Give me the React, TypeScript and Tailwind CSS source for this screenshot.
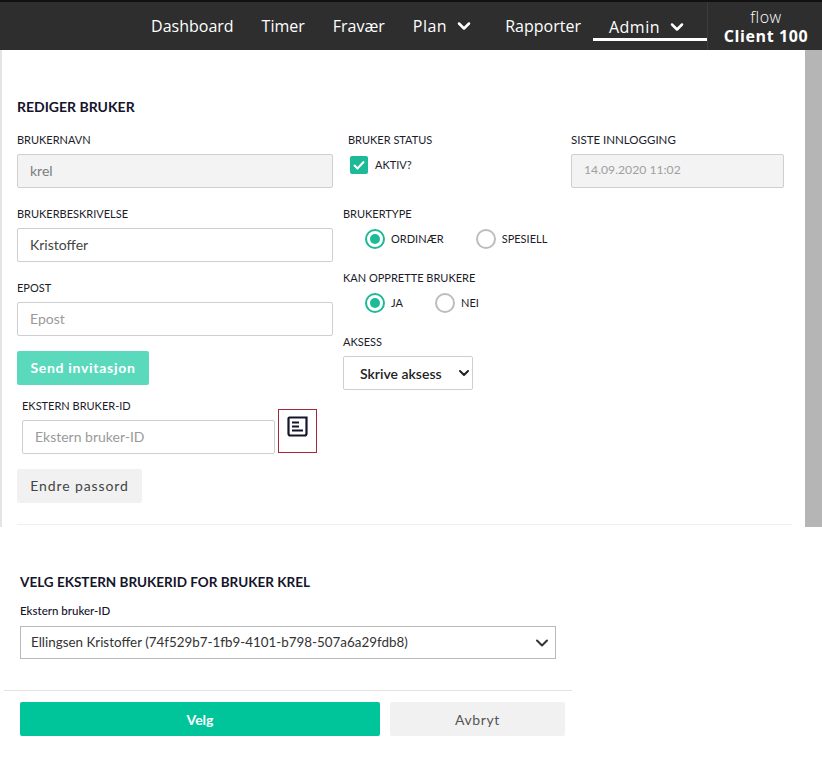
import { ChevronDown } from "lucide-react";

const formFont = "font-['Lato',sans-serif]";

const Label = ({
  children,
  className = "",
  size = "text-[11px]",
}: {
  children: string;
  className?: string;
  size?: string;
}) => <div className={`${size} leading-[14px] text-[#1c1c2b] ${className}`}>{children}</div>;

const Field = ({
  value,
  color = "text-[#444]",
  size = "text-[14px]",
  disabled,
  className = "",
}: {
  value: string;
  color?: string;
  size?: string;
  disabled?: boolean;
  className?: string;
}) => (
  <div
    className={`h-[34px] border border-[#cfcfcf] rounded-[2px] px-[12px] pb-[1px] flex items-center ${size} ${
      disabled ? "bg-[#f3f3f3]" : "bg-white"
    } ${color} ${className}`}
  >
    {value}
  </div>
);

const Radio = ({ label, checked }: { label: string; checked?: boolean }) => (
  <div className="flex items-center gap-[6px]">
    <span
      className={`w-[20px] h-[20px] rounded-full border-2 flex items-center justify-center ${
        checked ? "border-[#1dba98]" : "border-[#bdbdbd]"
      }`}
    >
      {checked && <span className="w-[10px] h-[10px] rounded-full bg-[#1dba98]" />}
    </span>
    <span className="text-[11px] text-[#1c1c2b]">{label}</span>
  </div>
);

const NavItem = ({ label, caret, active }: { label: string; caret?: boolean; active?: boolean }) => (
  <div
    className={`h-[39px] flex items-center border-b-[3px] text-[16px] ${
      active ? "border-white pl-[16px] pr-[20px] pt-[14px]" : "border-transparent pt-[12px]"
    } ${caret ? "gap-[7px] tracking-[0.5px]" : ""}`}
  >
    <span>{label}</span>
    {caret && <ChevronDown size={20} strokeWidth={3} />}
  </div>
);

export default function App() {
  return (
    <div className={`w-[822px] h-[774px] bg-white overflow-hidden ${formFont}`}>
      {/* Top bar */}
      <header className="h-[50px] bg-[#2e2e2e] border-t-2 border-[#111] flex justify-end font-['Open_Sans',sans-serif] text-white">
        <nav className="flex items-start gap-[28px]">
          <NavItem label="Dashboard" />
          <NavItem label="Timer" />
          <NavItem label="Fravær" />
          <NavItem label="Plan" caret />
          <div className="flex ml-[3px] gap-[12px]">
            <NavItem label="Rapporter" />
            <NavItem label="Admin" caret active />
          </div>
        </nav>
        <div className="w-[115px] border-l border-[#3c3c3c] flex flex-col items-center pt-[6px] pl-[2px] text-[16px] leading-[19px]">
          <span className="font-light tracking-[0.5px]">flow</span>
          <span className="font-bold tracking-[0.6px]">Client 100</span>
        </div>
      </header>

      {/* Edit form */}
      <section className="h-[477px] flex border-l-2 border-[#e4e4e4]">
        <div className="w-[803px] pl-[15px] pr-[13px] relative">
          <h1 className="mt-[49px] text-[14px] leading-[16px] font-bold text-[#14142b]">REDIGER BRUKER</h1>
          <div className="flex mt-[18px] gap-[10px]">
            <div className="w-[316px] shrink-0">
              <Label className="mb-[7px]">BRUKERNAVN</Label>
              <Field value="krel" disabled color="text-[#7d7d7d]" />
              <Label className="mt-[19px] mb-[7px]">BRUKERBESKRIVELSE</Label>
              <Field value="Kristoffer" />
              <Label className="mt-[19px] mb-[7px]">EPOST</Label>
              <Field value="Epost" color="text-[#9a9a9a]" />
              <button className="mt-[15px] block h-[34px] w-[132px] pb-[2px] rounded-[2px] bg-[#5bd9bd] text-white font-bold text-[14px] tracking-[0.7px]">
                Send invitasjon
              </button>
              <div className="ml-[5px] mt-[14px]">
                <Label className="mb-[7px]">EKSTERN BRUKER-ID</Label>
                <div className="flex">
                  <Field value="Ekstern bruker-ID" color="text-[#9a9a9a]" className="w-[253px]" />
                  <div className="ml-[3px] -mt-[11px] w-[39px] h-[44px] border border-[#a8243c] flex justify-center pt-[6px]">
                    <svg width="21" height="21" viewBox="0 0 21 21" fill="none">
                      <path d="M2.5 1.5H16L19.5 1.5V17.5C19.5 18.6 18.6 19.5 17.5 19.5H3.5C2.4 19.5 1.5 18.6 1.5 17.5V2.5C1.5 1.9 1.9 1.5 2.5 1.5Z" stroke="#14142b" strokeWidth="2.2" />
                      <path d="M5 6.5H12M5 10.5H12M5 14.5H16" stroke="#14142b" strokeWidth="2" />
                    </svg>
                  </div>
                </div>
              </div>
              <button className="mt-[15px] block h-[34px] w-[125px] pb-[2px] rounded-[2px] bg-[#f1f1f1] text-[#444] text-[14px] tracking-[0.9px]">
                Endre passord
              </button>
            </div>
            <div className="w-[228px] shrink-0">
              <Label className="ml-[5px] mb-[9px]">BRUKER STATUS</Label>
              <div className="flex items-start ml-[7px] gap-[7px]">
                <span className="w-[18px] h-[18px] rounded-[2px] bg-[#1dba98] flex items-center justify-center">
                  <svg width="12" height="10" viewBox="0 0 12 10" fill="none">
                    <path d="M1 5L4.5 8.5L11 1.5" stroke="white" strokeWidth="2" />
                  </svg>
                </span>
                <span className="text-[11px] leading-[14px] mt-[2px] text-[#1c1c2b]">AKTIV?</span>
              </div>
              <Label className="mt-[33px] mb-[8px]">BRUKERTYPE</Label>
              <div className="flex ml-[22px] gap-[32px]">
                <Radio label="ORDINÆR" checked />
                <Radio label="SPESIELL" />
              </div>
              <Label className="mt-[22px] mb-[8px]">KAN OPPRETTE BRUKERE</Label>
              <div className="flex ml-[22px] gap-[32px]">
                <Radio label="JA" checked />
                <Radio label="NEI" />
              </div>
              <Label className="mt-[22px] mb-[7px]">AKSESS</Label>
              <div className="w-[130px] h-[34px] border border-[#cfcfcf] rounded-[2px] flex items-center pl-[16px] justify-between text-[14px] font-semibold text-[#222]">
                <span>Skrive aksess</span>
                <ChevronDown size={16} strokeWidth={3} />
              </div>
            </div>
            <div className="w-[213px] shrink-0 -ml-[10px]">
              <Label className="mb-[7px]" size="text-[11.5px]">SISTE INNLOGGING</Label>
              <Field value="14.09.2020 11:02" disabled color="text-[#a0a0a0]" size="text-[12.2px]" />
            </div>
          </div>
          <div className="absolute left-[15px] right-[13px] bottom-[2px] h-px bg-[#eeeeee]" />
        </div>
        <div className="w-[17px] bg-[#b5b5b5]" />
      </section>

      {/* Modal */}
      <section className="w-[572px] pt-[47px]">
        <div className="pl-[20px]">
          <h2 className="text-[13.5px] leading-[16px] font-bold text-[#14142b]">VELG EKSTERN BRUKERID FOR BRUKER KREL</h2>
          <div className="mt-[14px] text-[11.5px] leading-[14px] text-[#14142b] font-medium">Ekstern bruker-ID</div>
          <div className="mt-[8px] w-[536px] h-[33px] border border-[#b9b9b9] flex items-center justify-between pl-[10px] pr-[3px] text-[13.4px] text-[#333]">
            <span>Ellingsen Kristoffer (74f529b7-1fb9-4101-b798-507a6a29fdb8)</span>
            <ChevronDown size={20} strokeWidth={2.4} />
          </div>
        </div>
        <div className="ml-[4px] mt-[31px] h-px bg-[#e2e2e2]" />
        <div className="flex pl-[20px] mt-[11px] gap-[10px]">
          <button className="w-[360px] h-[34px] rounded-[2px] bg-[#00c49a] text-white font-bold text-[14px]">Velg</button>
          <button className="w-[175px] h-[34px] rounded-[2px] bg-[#f1f1f1] text-[#555] text-[14px] tracking-[0.6px]">Avbryt</button>
        </div>
      </section>
    </div>
  );
}
